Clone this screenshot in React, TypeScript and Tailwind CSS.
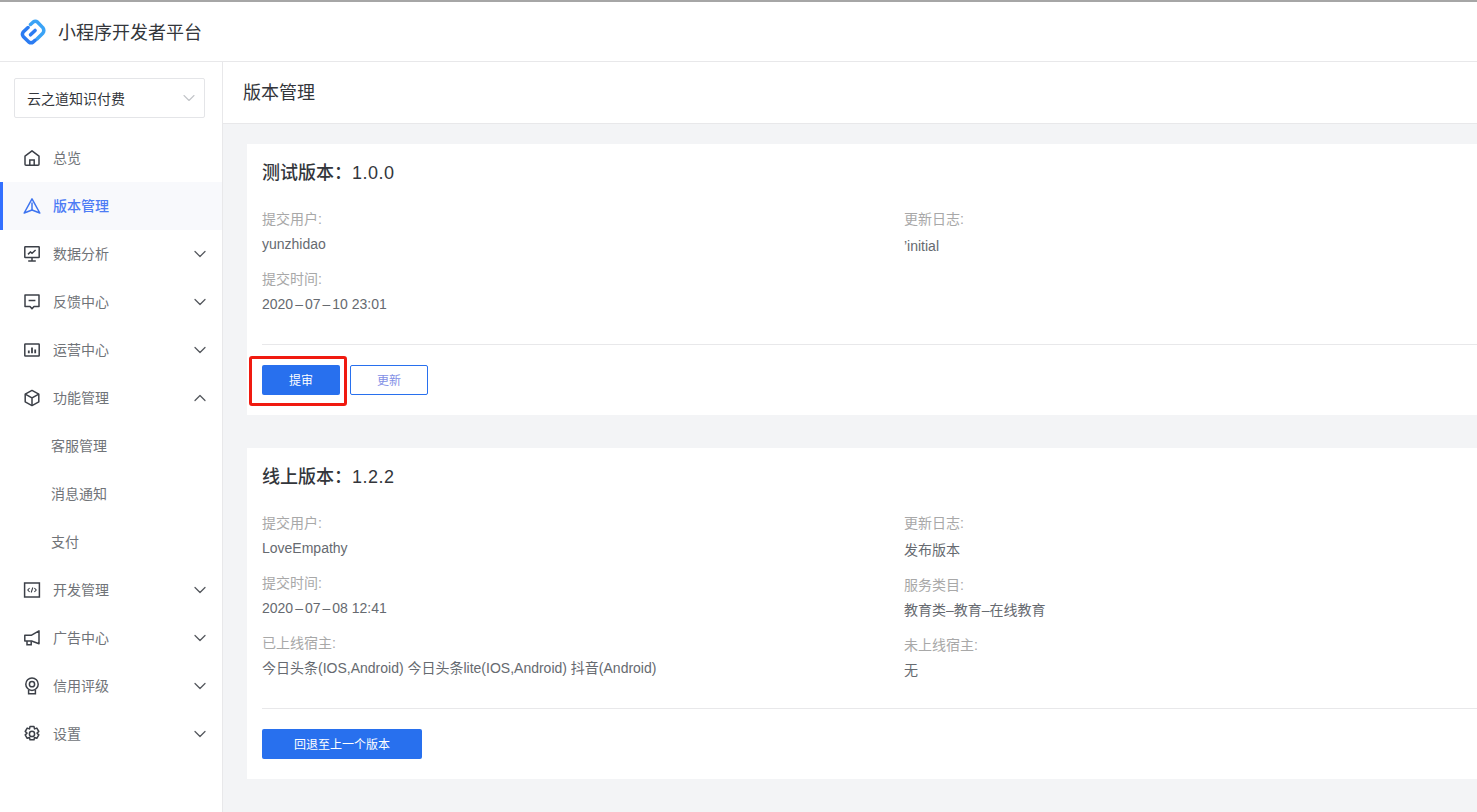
import { ChevronDown, ChevronUp } from "lucide-react"
import type { ReactNode } from "react"

const icons: Record<string, ReactNode> = {
  home: (
    <>
      <path d="M2 7.2 9 1.8l7 5.4v8a1 1 0 0 1-1 1H3a1 1 0 0 1-1-1z" strokeLinejoin="round" />
      <path d="M6.8 16v-5h4.4v5" />
    </>
  ),
  version: (
    <>
      <path d="M9 1.8 16.8 16 9 13 1.2 16z" strokeLinejoin="round" />
      <path d="M9 5.5V13" />
    </>
  ),
  data: (
    <>
      <rect x="1.8" y="1.8" width="14.4" height="10.8" rx="0.5" />
      <path d="M9 12.6v3.2M5.2 16h7.6" />
      <path d="m5 9.4 2.4-2.4 1.6 1.2L12.6 5" />
    </>
  ),
  feedback: (
    <>
      <path d="M2 2h14v11.4h-5L9 15.8l-2-2.4H2z" strokeLinejoin="round" />
      <path d="M5.6 7.5h6.8" />
    </>
  ),
  operate: (
    <>
      <rect x="1.8" y="3" width="14.4" height="12" rx="0.5" />
      <path d="M5.8 12.2V9.6M9 12.2V6.4M12.2 12.2V8.4" strokeWidth="1.8" />
    </>
  ),
  cube: (
    <>
      <path d="M9 1.4 15.8 5.2v7.6L9 16.6l-6.8-3.8V5.2z" strokeLinejoin="round" />
      <path d="M2.2 5.2 9 9l6.8-3.8M9 9v7.6" />
    </>
  ),
  code: (
    <>
      <rect x="1.6" y="2" width="14.8" height="14" />
      <path d="M6.6 7 4.8 9l1.8 2M11.4 7l1.8 2-1.8 2M9.8 6.5l-1.6 5" strokeWidth="1.1" />
    </>
  ),
  ad: (
    <>
      <path d="M16 1.8v13L8.6 12H1.8V6.2h6.8z" strokeLinejoin="round" />
      <path d="M4 12v3.8h4.2v-3.6" />
    </>
  ),
  credit: (
    <>
      <circle cx="9" cy="7.2" r="6.2" />
      <circle cx="9" cy="7.2" r="2.6" />
      <path d="M5.6 13v3.8h6.8V13" />
    </>
  ),
  settings: (
    <>
      <path d="M7 1.6h4l.5 2.3 2.3-.8 2 3.4-1.8 1.6 1.8 1.8-2 3.4-2.3-.8-.5 2.3H7l-.5-2.3-2.3.8-2-3.4 1.8-1.8L2.2 6.5l2-3.4 2.3.8z" strokeLinejoin="round" />
      <circle cx="9" cy="8.9" r="2.6" />
    </>
  ),
}

function MenuIcon({ name }: { name: string }) {
  return (
    <svg viewBox="0 0 18 18" fill="none" stroke="currentColor" strokeWidth="1.5" className="w-[18px] h-[18px] shrink-0">
      {icons[name]}
    </svg>
  )
}

function MenuItem({ icon, label, arrow, active }: { icon: string; label: string; arrow?: "up" | "down"; active?: boolean }) {
  return (
    <div className={`flex items-center h-12 pr-3 ${active ? "bg-[#f8f9fc] border-l-[3px] border-[#3370ff] pl-5 text-[#3d74f0]" : "pl-[23px] text-[#3c4048]"}`}>
      <MenuIcon name={icon} />
      <span className={`ml-3 text-sm ${active ? "text-[#4d7cf5] font-medium" : "text-[#707378]"}`}>{label}</span>
      {arrow === "down" && <ChevronDown className="ml-auto w-5 h-5 text-[#55585e]" strokeWidth={1.5} />}
      {arrow === "up" && <ChevronUp className="ml-auto w-5 h-5 text-[#55585e]" strokeWidth={1.5} />}
    </div>
  )
}

function SubItem({ label }: { label: string }) {
  return <div className="flex items-center h-12 pl-[51px] text-sm text-[#707378]">{label}</div>
}

function Dash() {
  return <span className="mx-[2px]">–</span>
}

function Field({ label, children, gap }: { label: string; children: ReactNode; gap?: boolean }) {
  return (
    <div className="mb-[11px]">
      <div className="h-6 leading-6 text-sm text-[#a8a8a8]">{label}</div>
      <div className={`h-6 leading-6 text-sm text-[#666a70] whitespace-nowrap ${gap ? "mt-[3px]" : "mt-px"}`}>{children}</div>
    </div>
  )
}

function Card({ title, version, left, right, children }: { title: string; version: string; left: ReactNode; right: ReactNode; children: ReactNode }) {
  return (
    <div className="w-[1314px] bg-white pl-[15px] pt-[15px] pb-5">
      <h2 className="h-7 leading-7 text-[18px] font-medium text-[#33363b]">
        {title}：<span className="tracking-[0.5px]">{version}</span>
      </h2>
      <div className="grid grid-cols-[642px_1fr] mt-5">
        <div>{left}</div>
        <div className="-mb-[2px]">{right}</div>
      </div>
      <div className="mt-[17px] h-px bg-[#e8e8ea]" />
      <div className="mt-5 flex gap-[10px]">{children}</div>
    </div>
  )
}

export default function App() {
  return (
    <div className="w-[1477px] h-[812px] overflow-hidden bg-white flex flex-col font-['Liberation_Sans','Noto_Sans_CJK_SC',sans-serif]">
      <header className="h-[62px] shrink-0 flex items-center bg-white border-t-2 border-t-[#a6a6a6] border-b border-b-[#e8e8ea] pl-[20px]">
        <svg viewBox="0 0 26 26" className="w-[26px] h-[26px]">
          <g fill="none" strokeWidth="3.5" strokeLinecap="round" strokeLinejoin="round">
            <path d="M10.5 5.5 13 3.2Q15.4 1.4 17.6 3.2L22.8 8.6Q24.8 11.4 22.8 14.2L17 20" stroke="#3aa3f6" />
            <path d="M8 8.5 3.2 13Q1.6 15.4 3.2 17.4L8.8 23Q11 24.6 13.2 23L15 21.4" stroke="#2b7cf2" />
            <path d="m10.5 15.8 4.6-4.4" stroke="#2b7cf2" />
          </g>
        </svg>
        <span className="ml-3 pt-[3px] text-[18px] text-[#33363b]">小程序开发者平台</span>
      </header>
      <div className="flex flex-1 min-h-0">
        <aside className="w-[223px] shrink-0 bg-white border-r border-[#e8e8ea]">
          <div className="mx-[14px] mt-4 h-10 w-[191px] flex items-center justify-between pl-3 pr-[5px] border border-[#e4e5e8] rounded-[2px]">
            <span className="pt-px text-sm text-[#33363b]">云之道知识付费</span>
            <ChevronDown className="w-5 h-5 text-[#c2c4c8]" strokeWidth={1.3} />
          </div>
          <nav className="mt-4">
            <MenuItem icon="home" label="总览" />
            <MenuItem icon="version" label="版本管理" active />
            <MenuItem icon="data" label="数据分析" arrow="down" />
            <MenuItem icon="feedback" label="反馈中心" arrow="down" />
            <MenuItem icon="operate" label="运营中心" arrow="down" />
            <MenuItem icon="cube" label="功能管理" arrow="up" />
            <SubItem label="客服管理" />
            <SubItem label="消息通知" />
            <SubItem label="支付" />
            <MenuItem icon="code" label="开发管理" arrow="down" />
            <MenuItem icon="ad" label="广告中心" arrow="down" />
            <MenuItem icon="credit" label="信用评级" arrow="down" />
            <MenuItem icon="settings" label="设置" arrow="down" />
          </nav>
        </aside>
        <main className="flex-1 min-w-0 overflow-hidden bg-[#f3f4f6]">
          <div className="h-[62px] flex items-center bg-white border-b border-[#e8e8ea] pl-5 pt-px text-[18px] text-[#33363b]">版本管理</div>
          <div className="pl-6 pt-5 flex flex-col gap-[33px]">
            <Card
              title="测试版本"
              version="1.0.0"
              left={
                <>
                  <Field label="提交用户:">yunzhidao</Field>
                  <Field label="提交时间:">2020<Dash />07<Dash />10 23:01</Field>
                </>
              }
              right={<Field label="更新日志:" gap>’initial</Field>}
            >
              <div className="relative">
                <button className="block w-[78px] h-[30px] pt-px rounded-[2px] bg-[#2870ee] text-xs text-white">提审</button>
                <span className="absolute -left-[13px] -top-[9px] -right-[7px] -bottom-[11px] border-[3px] border-[#f01a10] rounded-[3px]" />
              </div>
              <button className="w-[78px] h-[30px] pt-px rounded-[2px] border border-[#2870ee] bg-white text-xs text-[#8390e6]">更新</button>
            </Card>
            <Card
              title="线上版本"
              version="1.2.2"
              left={
                <>
                  <Field label="提交用户:">LoveEmpathy</Field>
                  <Field label="提交时间:">2020<Dash />07<Dash />08 12:41</Field>
                  <Field label="已上线宿主:">今日头条(IOS,Android) 今日头条lite(IOS,Android) 抖音(Android)</Field>
                </>
              }
              right={
                <>
                  <Field label="更新日志:" gap>发布版本</Field>
                  <Field label="服务类目:">教育类–教育–在线教育</Field>
                  <Field label="未上线宿主:">无</Field>
                </>
              }
            >
              <button className="w-40 h-[30px] pt-px rounded-[2px] bg-[#2870ee] text-xs text-white">回退至上一个版本</button>
            </Card>
          </div>
        </main>
      </div>
    </div>
  )
}
